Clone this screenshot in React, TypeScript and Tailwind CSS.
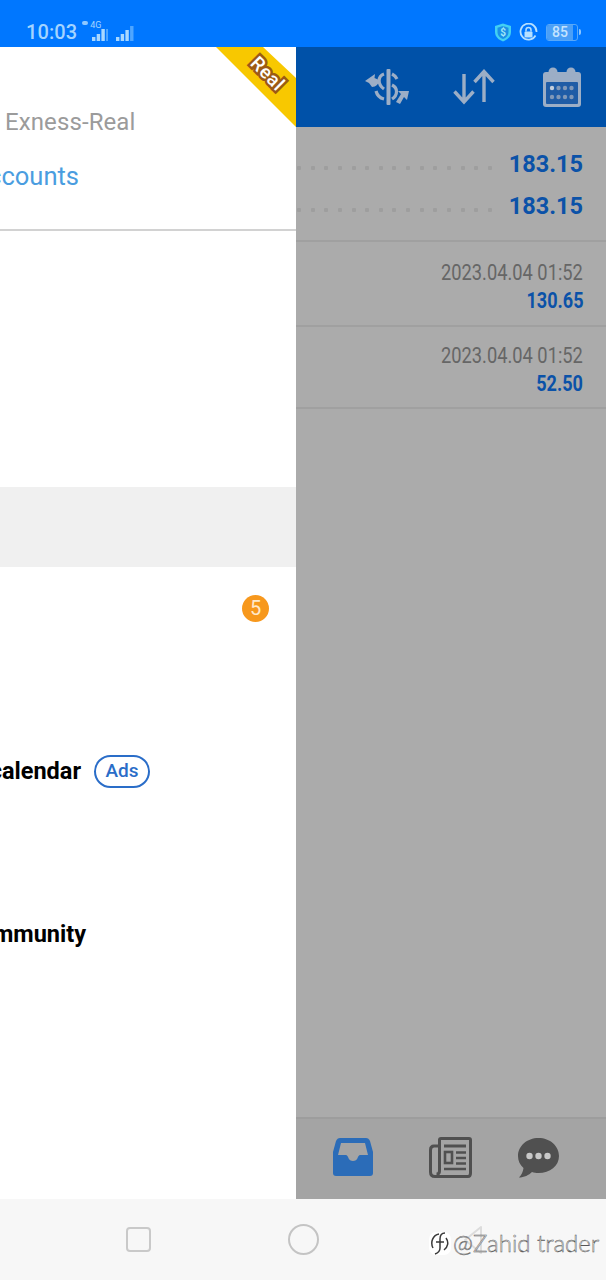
import React from "react";
import type { FC } from "react";

const font = { roboto: "font-['Roboto',sans-serif]" };

const SignalBars: FC<{ bars: number[]; w: number; last: string }> = ({ bars, w, last }) => (
  <svg width={w} height="15" viewBox={`0 0 ${w} 15`}>
    {bars.map((h, i) => (
      <rect
        key={i}
        x={i * 4.7}
        y={15 - h}
        width="3.4"
        height={h}
        fill={i === bars.length - 1 ? last : "#a9d8ff"}
      />
    ))}
  </svg>
);

const StatusBar: FC = () => (
  <div className="h-[47px] shrink-0 bg-[#0077ff] flex items-center pl-[26px] pr-[25px] pt-[17px] text-[#a4d4ff]">
    <span className="text-[20px] leading-none font-medium tracking-[0.1px]">10:03</span>
    <div className="ml-[15px] relative w-[15px] h-[15px] mt-[2px]">
      <SignalBars bars={[4, 7, 12, 12]} w={16} last="#4fa6ff" />
      <span className="absolute left-[-2px] top-[-5px] text-[9px] leading-none">4G</span>
      <span className="absolute left-[-10px] top-[-5px] w-[6px] h-[4px] rounded-full bg-[#8fc8ff]" />
    </div>
    <div className="ml-[9px] mt-[2px]">
      <SignalBars bars={[4, 7, 11, 15]} w={18} last="#4fa6ff" />
    </div>
    <div className="ml-auto flex items-center gap-[7px]">
      <svg width="18" height="19" viewBox="0 0 18 19">
        <path d="M9 0.5 L17 3 V9 C17 14 13 17 9 18.5 C5 17 1 14 1 9 V3 Z" fill="#42d0f2" />
        <path d="M9 3 L14.5 4.8 V9 C14.5 12.6 12 14.8 9 16 C6 14.8 3.5 12.6 3.5 9 V4.8 Z" fill="#1a8fe8" />
        <text x="9" y="13" textAnchor="middle" fontSize="10" fontWeight="700" fill="#9fe6f7">$</text>
      </svg>
      <svg width="19" height="19" viewBox="0 0 19 19">
        <path d="M16.5 12.5 A8 8 0 1 1 17.5 9" fill="none" stroke="#b6e0ff" strokeWidth="1.8" />
        <rect x="5.5" y="8.5" width="8" height="6" rx="1" fill="#b6e0ff" />
        <path d="M7 8.5 V7 A2.5 2.5 0 0 1 12 7 V8.5" fill="none" stroke="#b6e0ff" strokeWidth="1.5" />
      </svg>
      <div className="flex items-center ml-[1px]">
        <div className="w-[32px] h-[17px] rounded-[3px] border border-[#58a8f8] overflow-hidden flex">
          <span className="w-[26px] text-center text-[14px] leading-[15px] font-medium text-[#c4e3ff] bg-[#4a9ff7]">85</span>
        </div>
        <div className="w-[2px] h-[6px] bg-[#8cc6ff] ml-[1px] rounded-r-sm" />
      </div>
    </div>
  </div>
);

const MenuRow: FC<{ children?: React.ReactNode }> = ({ children }) => (
  <div className="h-[81.25px] flex items-center relative">{children}</div>
);

const Drawer: FC = () => (
  <div className="w-[296px] shrink-0 bg-white flex flex-col relative overflow-hidden">
    <div className="h-[184px] shrink-0 border-b-2 border-[#d2d2d2] flex flex-col">
      <div className="pl-[5px] pt-[61px] text-[24px] leading-[28px] text-[#9b9b9b] tracking-[0.1px]">Exness-Real</div>
      <div className="mt-[25px] w-[79px] flex justify-end text-[25.5px] leading-[30px] text-[#4a9de0] whitespace-nowrap">
        <span className="shrink-0">Manage accounts</span>
      </div>
    </div>
    <div className="h-[256px] shrink-0" />
    <div className="h-[80px] shrink-0 bg-[#f0f0f0]" />
    <div className="flex-1 flex flex-col pt-[1px]">
      <MenuRow>
        <span className="ml-auto mr-[27px] w-[27px] h-[27px] rounded-full bg-[#f7981d] text-[#ffe9cc] text-[20px] leading-[27px] text-center">5</span>
      </MenuRow>
      <MenuRow />
      <MenuRow>
        <div className="w-[81px] flex justify-end whitespace-nowrap text-[23.5px] font-bold text-black">
          <span className="shrink-0">Economic calendar</span>
        </div>
        <span className="ml-[13px] w-[56px] h-[33px] rounded-full border-2 border-[#2a6dc8] text-[#2a6dc8] text-[19px] font-medium leading-[28px] text-center">Ads</span>
      </MenuRow>
      <MenuRow />
      <MenuRow>
        <div className="w-[86px] mt-[1px] flex justify-end whitespace-nowrap text-[23.5px] font-bold text-black">
          <span className="shrink-0">Traders Community</span>
        </div>
      </MenuRow>
    </div>
    {/* corner ribbon */}
    <svg className="absolute top-0 right-0" width="80" height="80" viewBox="0 0 80 80">
      <polygon points="0,0 47,0 80,31 80,80" fill="#f8c800" />
    </svg>
    <span className="absolute top-[17px] right-[9px] rotate-45 text-[19px] font-medium leading-none text-white tracking-[0.5px] [-webkit-text-stroke:5px_#9c5a14] [paint-order:stroke_fill]">
      Real
    </span>
  </div>
);

const ExchangeIcon: FC = () => (
  <svg width="44" height="36" viewBox="0 0 44 36" fill="#9caec6">
    <rect x="21.5" y="0" width="4" height="36" rx="1" />
    <g fill="none" stroke="#9caec6" strokeWidth="3.2">
      <path d="M19 5 C13 7 12 15 19 20" />
      <path d="M27 16 C33 19 33 26 27 30" />
      <path d="M27 5 C29 6 31 8 32 10" />
      <path d="M11 22 C12 26 15 29 19 30" />
    </g>
    <path d="M0 12 L10 5 L9.5 9 L14 11 C14 15 11 18 7 18 L4 14 Z" />
    <path d="M44 22 L33 22 L36 25 L31 33 L35 35 L39 28 L42 31 Z" />
  </svg>
);

const ArrowsIcon: FC = () => (
  <svg width="42" height="36" viewBox="0 0 42 36" fill="none" stroke="#9caec6" strokeWidth="3.4">
    <path d="M11 5 V33 M1.5 22.5 L11 33 L20.5 22.5" />
    <path d="M31 33 V2.5 M21.5 13 L31 2.5 L40.5 13" />
  </svg>
);

const CalendarIcon: FC = () => (
  <svg width="40" height="40" viewBox="0 0 40 40">
    <rect x="1" y="5" width="38" height="35" rx="3" fill="#9caec6" />
    <rect x="4" y="15" width="32" height="22" rx="1" fill="#1f5ca6" />
    <circle cx="11" cy="5" r="4.5" fill="#9caec6" />
    <circle cx="29" cy="5" r="4.5" fill="#9caec6" />
    {[10, 16.5, 23, 29.5].map((x) =>
      [21, 30].map((y) => (
        <circle key={`${x}-${y}`} cx={x} cy={y} r="2.2" fill={x === 10 && y === 21 ? "#c4cedb" : "#8098b8"} />
      ))
    )}
  </svg>
);

const Dots: FC = () => (
  <div className="flex-1 flex justify-between pl-[1px] pr-[17px] mt-[7px]">
    {Array.from({ length: 15 }).map((_, i) => (
      <span key={i} className="w-[4px] h-[4px] rounded-[1px] bg-[#9e9e9e]" />
    ))}
  </div>
);

const TotalRow: FC<{ value: string }> = ({ value }) => (
  <div className="h-[42px] flex items-center pr-[23px]">
    <Dots />
    <span className="mt-[1px] text-[23.5px] font-bold text-[#0b52a8] leading-none">{value}</span>
  </div>
);

const DealRow: FC<{ time: string; amount: string; height: string; top: string }> = ({ time, amount, height, top }) => (
  <div className={`${height} ${top} border-b-2 border-[#a0a0a0] flex flex-col items-end pr-[23px]`}>
    <span className="text-[21.5px] leading-[25px] text-[#666666] scale-x-[0.85] origin-right whitespace-nowrap">{time}</span>
    <span className="mt-[3px] text-[22px] leading-[25px] font-bold text-[#0b52a8] scale-x-[0.82] origin-right">{amount}</span>
  </div>
);

const TabBar: FC = () => (
  <div className="h-[82px] shrink-0 bg-[#a4a4a4] border-t-2 border-[#9d9d9d] flex items-start pt-[18px] pl-[36px]">
    <svg width="42" height="40" viewBox="0 0 42 40">
      <path
        d="M8 1 H34 C36 1 37 2 38 4 L41 15 V36 C41 38 40 39 38 39 H4 C2 39 1 38 1 36 V15 L4 4 C5 2 6 1 8 1 Z"
        fill="#2b6cb8"
      />
      <path d="M9 6 H33 L36 18 H28 C27 18 26.5 19 26 20 C25 23 23 24 21 24 C19 24 17 23 16 20 C15.5 19 15 18 14 18 H6 Z" fill="#a4a4a4" />
    </svg>
    <svg className="ml-[55px]" width="43" height="41" viewBox="0 0 43 41" fill="none" stroke="#505050">
      <path d="M9 9 H5 C2.5 9 1.5 11 1.5 13 V35 C1.5 38 3 39.5 6 39.5 H39 C41 39.5 41.5 38 41.5 36 V3 C41.5 2 41 1.5 40 1.5 H12 C11 1.5 10.5 2 10.5 3 V34 C10.5 36 9 37 7.5 37" strokeWidth="3" />
      <path d="M15 9 H37" strokeWidth="3" />
      <rect x="16" y="15" width="7" height="11" strokeWidth="2.6" />
      <path d="M27 15.5 H37 M27 21 H37 M27 26.5 H37 M15 32 H37" strokeWidth="2.6" />
    </svg>
    <svg className="ml-[46px]" width="41" height="41" viewBox="0 0 41 41">
      <path d="M20.5 1 C32 1 41 9 41 19 C41 29 32 36 20.5 36 C18 36 16 35.6 14 35 C11 38 6 40.5 1 40.5 C3.5 38 5 35 5.5 31 C2 28 0 24 0 19 C0 9 9 1 20.5 1 Z" fill="#505050" />
      <circle cx="11.5" cy="19" r="3.2" fill="#c8c8c8" />
      <circle cx="20.5" cy="19" r="3.2" fill="#c8c8c8" />
      <circle cx="29.5" cy="19" r="3.2" fill="#c8c8c8" />
    </svg>
  </div>
);

const MainPanel: FC = () => (
  <div className="flex-1 bg-[#ababab] flex flex-col min-w-0">
    <div className="h-[80px] shrink-0 bg-[#0051a8] flex items-center justify-end pr-[24px]">
      <ExchangeIcon />
      <div className="ml-[44px]"><ArrowsIcon /></div>
      <div className="ml-[47px]"><CalendarIcon /></div>
    </div>
    <div className="h-[115px] shrink-0 pt-[16px] border-b-2 border-[#a0a0a0]">
      <TotalRow value="183.15" />
      <TotalRow value="183.15" />
    </div>
    <DealRow time="2023.04.04 01:52" amount="130.65" height="h-[85px]" top="pt-[18px]" />
    <DealRow time="2023.04.04 01:52" amount="52.50" height="h-[82px]" top="pt-[16px]" />
    <div className="flex-1" />
    <TabBar />
  </div>
);

const NavBar: FC = () => (
  <div className="h-[81px] shrink-0 bg-[#f7f7f7] flex items-center pl-[126px] relative">
    <div className="w-[25px] h-[25px] rounded-[4px] border-2 border-[#c9c9c9]" />
    <div className="ml-[137px] w-[31px] h-[31px] rounded-full border-2 border-[#c4c4c4]" />
    <svg className="ml-[144px]" width="20" height="30" viewBox="0 0 20 30" fill="none" stroke="#dcdcdc" strokeWidth="2">
      <path d="M18 2 L2 15 L18 28 Z" strokeLinejoin="round" />
    </svg>
    {/* watermark */}
    <div className="absolute left-[429px] top-[32px] flex items-center">
      <div className="w-[22px] h-[23px] rounded-[7px] bg-white flex items-center justify-center">
        <svg width="20" height="24" viewBox="0 0 20 24" fill="none" stroke="#3a3a3a" strokeWidth="1.5">
          <path d="M3 17 C0 11 3 4 9 3 M15 2 C12 2 10 4 10 8 V17 C10 20 8 22 5 23 M6 11 H14 M16 7 C19 11 18 16 14 19" />
        </svg>
      </div>
      <span className="ml-[2px] text-[24px] leading-none font-['Lato',sans-serif] font-light text-white [-webkit-text-stroke:0.5px_#555555] whitespace-nowrap">
        @Zahid trader
      </span>
    </div>
  </div>
);

const App: FC = () => (
  <div className={`w-[606px] h-[1280px] flex flex-col overflow-hidden ${font.roboto}`}>
    <StatusBar />
    <div className="flex-1 flex min-h-0">
      <Drawer />
      <MainPanel />
    </div>
    <NavBar />
  </div>
);

export default App;
